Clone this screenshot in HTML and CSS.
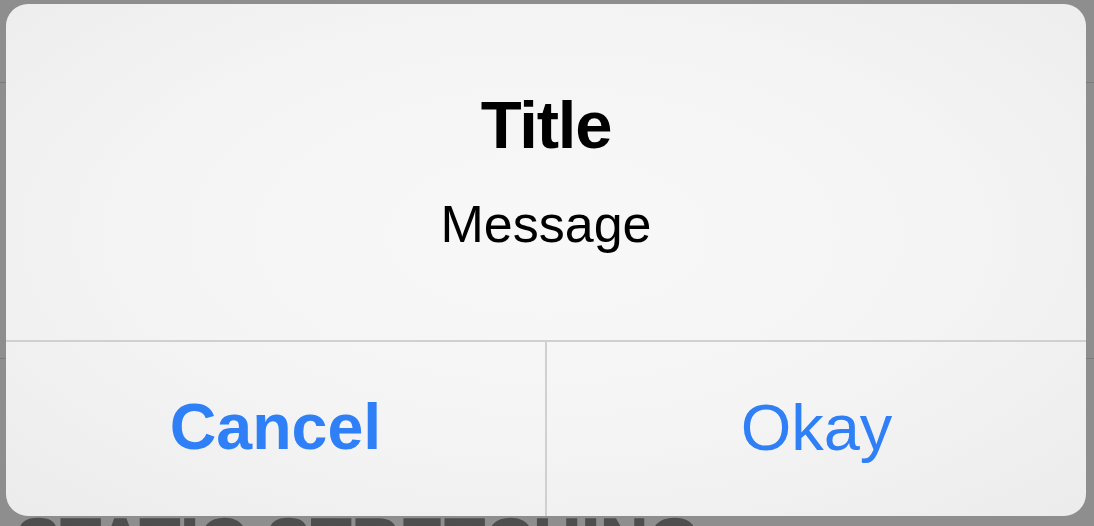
FILE: index.html
```html
<!DOCTYPE html>
<html lang="en">
<head>
<meta charset="utf-8">
<title>Alert</title>
<link rel="stylesheet" href="styles.css">
</head>
<body>
<div class="screen">
  <header class="nav-bar"></header>
  <section class="row"></section>
  <h1 class="section-heading">STATIC STRETCHING</h1>

  <div class="alert" role="alertdialog">
    <div class="alert-body">
      <h2 class="alert-title">Title</h2>
      <p class="alert-message">Message</p>
    </div>
    <div class="alert-actions">
      <button class="alert-button is-preferred">Cancel</button>
      <button class="alert-button">Okay</button>
    </div>
  </div>
</div>
</body>
</html>
```
FILE: styles.css
```css
html, body {
  margin: 0;
  padding: 0;
  background: #8e8e8e;
  font-family: "Liberation Sans", Arial, sans-serif;
}

.screen {
  position: relative;
  width: 1094px;
  height: 526px;
  overflow: hidden;
}

/* page content dimmed behind the dialog */
.nav-bar {
  height: 82px;
  border-bottom: 1px solid #7c7c7c;
}

.row {
  height: 275px;
  border-bottom: 1px solid #7c7c7c;
}

.section-heading {
  margin: 150px 0 0;
  padding-left: 16px;
  font-size: 66px;
  line-height: 1;
  font-weight: 700;
  letter-spacing: 0.5px;
  color: #4e4e4e;
  white-space: nowrap;
  -webkit-text-stroke: 1.5px #4e4e4e;
}

/* dialog */
.alert {
  position: absolute;
  top: 4px;
  left: 6px;
  width: 1080px;
  height: 512px;
  border-radius: 22px;
  overflow: hidden;
  background: radial-gradient(ellipse 70% 75% at 50% 45%, #f8f8f8 0%, #f4f4f4 55%, #ececec 100%);
  display: flex;
  flex-direction: column;
}

.alert-body {
  height: 338px;
  padding-top: 81px;
  box-sizing: border-box;
  text-align: center;
  border-bottom: 2px solid #d0d0d0;
}

.alert-title {
  margin: 0;
  font-size: 67px;
  line-height: 80px;
  font-weight: 700;
  letter-spacing: -1.2px;
  color: #000;
}

.alert-message {
  margin: 29px 0 0;
  font-size: 52px;
  line-height: 60px;
  color: #000;
}

.alert-actions {
  flex: 1;
  display: flex;
}

.alert-button {
  flex: 1;
  margin: 0;
  padding: 0 0 4px;
  border: 0;
  background: transparent;
  font-family: inherit;
  font-size: 65px;
  color: #2f80f7;
}

.alert-button + .alert-button {
  border-left: 2px solid #d0d0d0;
}

.alert-button.is-preferred {
  font-weight: 700;
  font-size: 64.5px;
}
```
